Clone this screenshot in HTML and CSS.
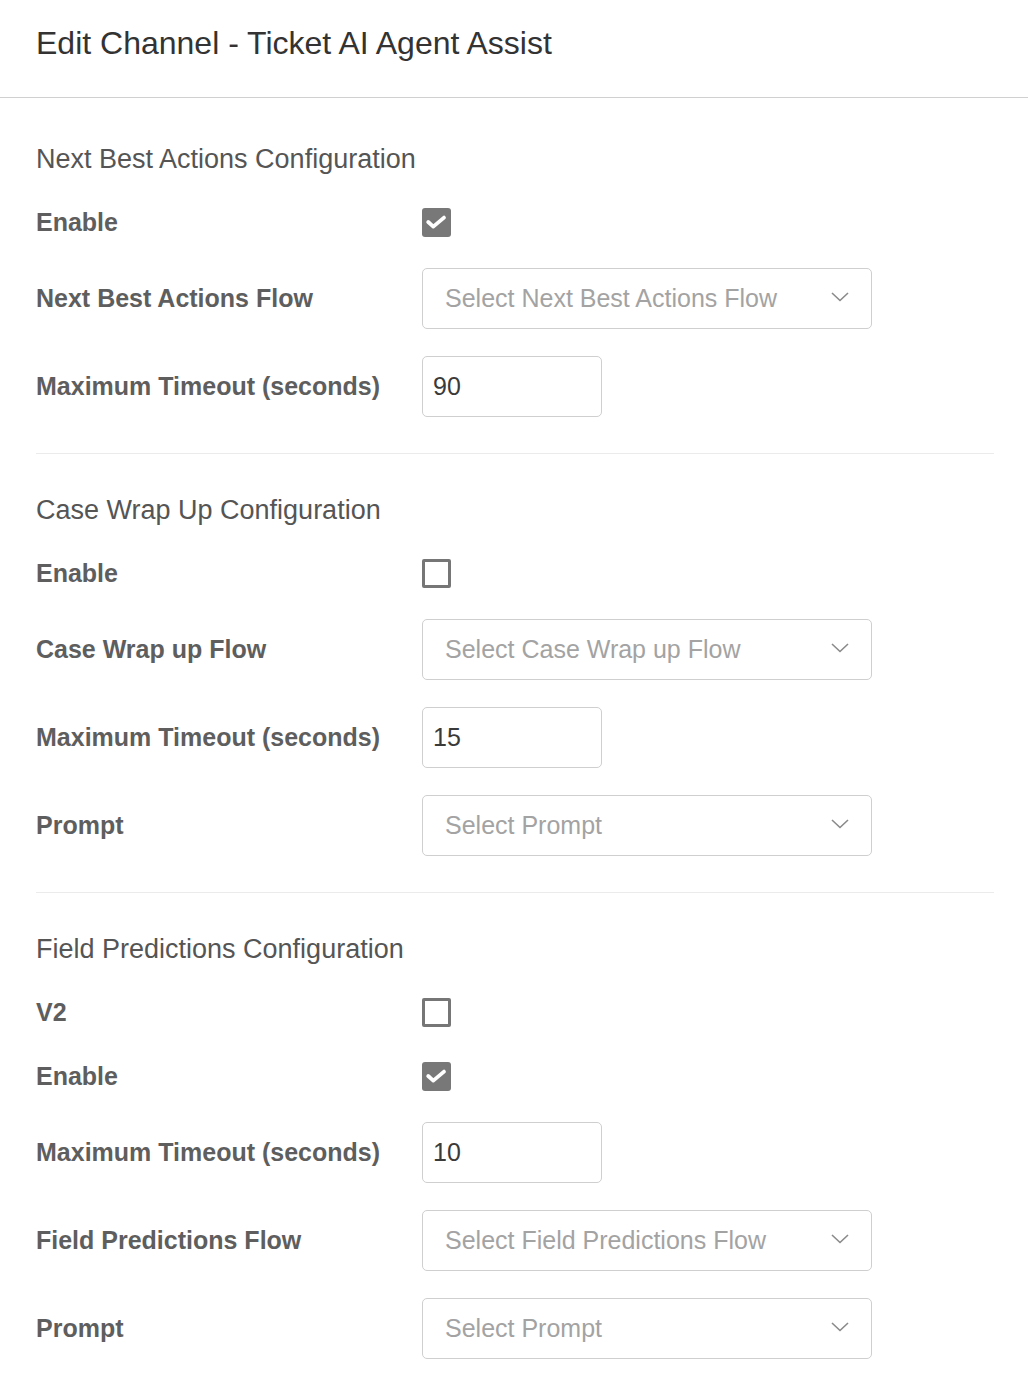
FILE: index.html
```html
<!DOCTYPE html>
<html>
<head>
<meta charset="utf-8">
<link rel="stylesheet" href="styles.css">
</head>
<body>
<header class="page-header">
  <h1 class="page-title">Edit Channel - Ticket AI Agent Assist</h1>
</header>
<main class="content">
  <section class="section first">
    <h2 class="section-title">Next Best Actions Configuration</h2>
    <div class="row row-check">
      <label class="label">Enable</label>
      <span class="checkbox checked"><svg viewBox="0 0 29 29" width="29" height="29"><path d="M6.2 14 L11.3 18.6 L22 9.6" fill="none" stroke="#fff" stroke-width="3.8" stroke-linecap="round" stroke-linejoin="round"/></svg></span>
    </div>
    <div class="row">
      <label class="label">Next Best Actions Flow</label>
      <div class="select"><span class="placeholder">Select Next Best Actions Flow</span><svg class="chev" viewBox="0 0 18 10" width="18" height="10"><path d="M1 1 L9 8.5 L17 1" fill="none" stroke="#8a8a8a" stroke-width="1.6"/></svg></div>
    </div>
    <div class="row">
      <label class="label">Maximum Timeout (seconds)</label>
      <div class="input">90</div>
    </div>
  </section>
  <section class="section">
    <h2 class="section-title">Case Wrap Up Configuration</h2>
    <div class="row row-check">
      <label class="label">Enable</label>
      <span class="checkbox"></span>
    </div>
    <div class="row">
      <label class="label">Case Wrap up Flow</label>
      <div class="select"><span class="placeholder">Select Case Wrap up Flow</span><svg class="chev" viewBox="0 0 18 10" width="18" height="10"><path d="M1 1 L9 8.5 L17 1" fill="none" stroke="#8a8a8a" stroke-width="1.6"/></svg></div>
    </div>
    <div class="row">
      <label class="label">Maximum Timeout (seconds)</label>
      <div class="input">15</div>
    </div>
    <div class="row">
      <label class="label">Prompt</label>
      <div class="select"><span class="placeholder">Select Prompt</span><svg class="chev" viewBox="0 0 18 10" width="18" height="10"><path d="M1 1 L9 8.5 L17 1" fill="none" stroke="#8a8a8a" stroke-width="1.6"/></svg></div>
    </div>
  </section>
  <section class="section last">
    <h2 class="section-title">Field Predictions Configuration</h2>
    <div class="row row-check">
      <label class="label">V2</label>
      <span class="checkbox"></span>
    </div>
    <div class="row row-check">
      <label class="label">Enable</label>
      <span class="checkbox checked"><svg viewBox="0 0 29 29" width="29" height="29"><path d="M6.2 14 L11.3 18.6 L22 9.6" fill="none" stroke="#fff" stroke-width="3.8" stroke-linecap="round" stroke-linejoin="round"/></svg></span>
    </div>
    <div class="row">
      <label class="label">Maximum Timeout (seconds)</label>
      <div class="input">10</div>
    </div>
    <div class="row">
      <label class="label">Field Predictions Flow</label>
      <div class="select"><span class="placeholder">Select Field Predictions Flow</span><svg class="chev" viewBox="0 0 18 10" width="18" height="10"><path d="M1 1 L9 8.5 L17 1" fill="none" stroke="#8a8a8a" stroke-width="1.6"/></svg></div>
    </div>
    <div class="row">
      <label class="label">Prompt</label>
      <div class="select"><span class="placeholder">Select Prompt</span><svg class="chev" viewBox="0 0 18 10" width="18" height="10"><path d="M1 1 L9 8.5 L17 1" fill="none" stroke="#8a8a8a" stroke-width="1.6"/></svg></div>
    </div>
  </section>
</main>
</body>
</html>
```

FILE: styles.css
```css
* { box-sizing: border-box; }
html, body {
  margin: 0;
  padding: 0;
  background: #fff;
  font-family: "Liberation Sans", Arial, Helvetica, sans-serif;
}
.page-header {
  height: 98px;
  border-bottom: 1px solid #d0d0d0;
  padding: 0 36px;
  display: flex;
  align-items: center;
}
.page-title {
  margin: 0;
  margin-top: -12px;
  font-size: 32px;
  font-weight: normal;
  color: #333;
  line-height: 36px;
}
.content {
  padding: 6px 34px 0 36px;
}
.section {
  display: flex;
  flex-direction: column;
  gap: 28px;
  padding: 40px 0 37px;
  border-bottom: 1px solid #ebebeb;
}
.section.first {
  padding-top: 39px;
}
.section.last {
  border-bottom: none;
}
.section-title {
  margin: 0;
  height: 33px;
  line-height: 33px;
  font-size: 27px;
  font-weight: normal;
  color: #555;
}
.row {
  display: flex;
  align-items: center;
  height: 60px;
}
.row-check {
  height: 36px;
}
.label {
  width: 386px;
  flex: none;
  font-size: 25px;
  font-weight: bold;
  color: #5e5e5e;
}
.checkbox {
  width: 29px;
  height: 29px;
  border: 3px solid #767676;
  border-radius: 2px;
  display: block;
}
.checkbox.checked {
  background: #787878;
  border: none;
  border-radius: 3px;
}
.checkbox svg {
  display: block;
}
.select {
  width: 450px;
  height: 61px;
  border: 1px solid #cfcfcf;
  border-radius: 5px;
  display: flex;
  align-items: center;
  justify-content: space-between;
  padding: 0 22px 0 22px;
}
.placeholder {
  font-size: 25px;
  color: #a3a3a3;
}
.chev {
  display: block;
  margin-top: -2px;
}
.input {
  width: 180px;
  height: 61px;
  border: 1px solid #cfcfcf;
  border-radius: 5px;
  display: flex;
  align-items: center;
  padding: 0 10px;
  font-size: 25px;
  color: #3a3a3a;
}
```
